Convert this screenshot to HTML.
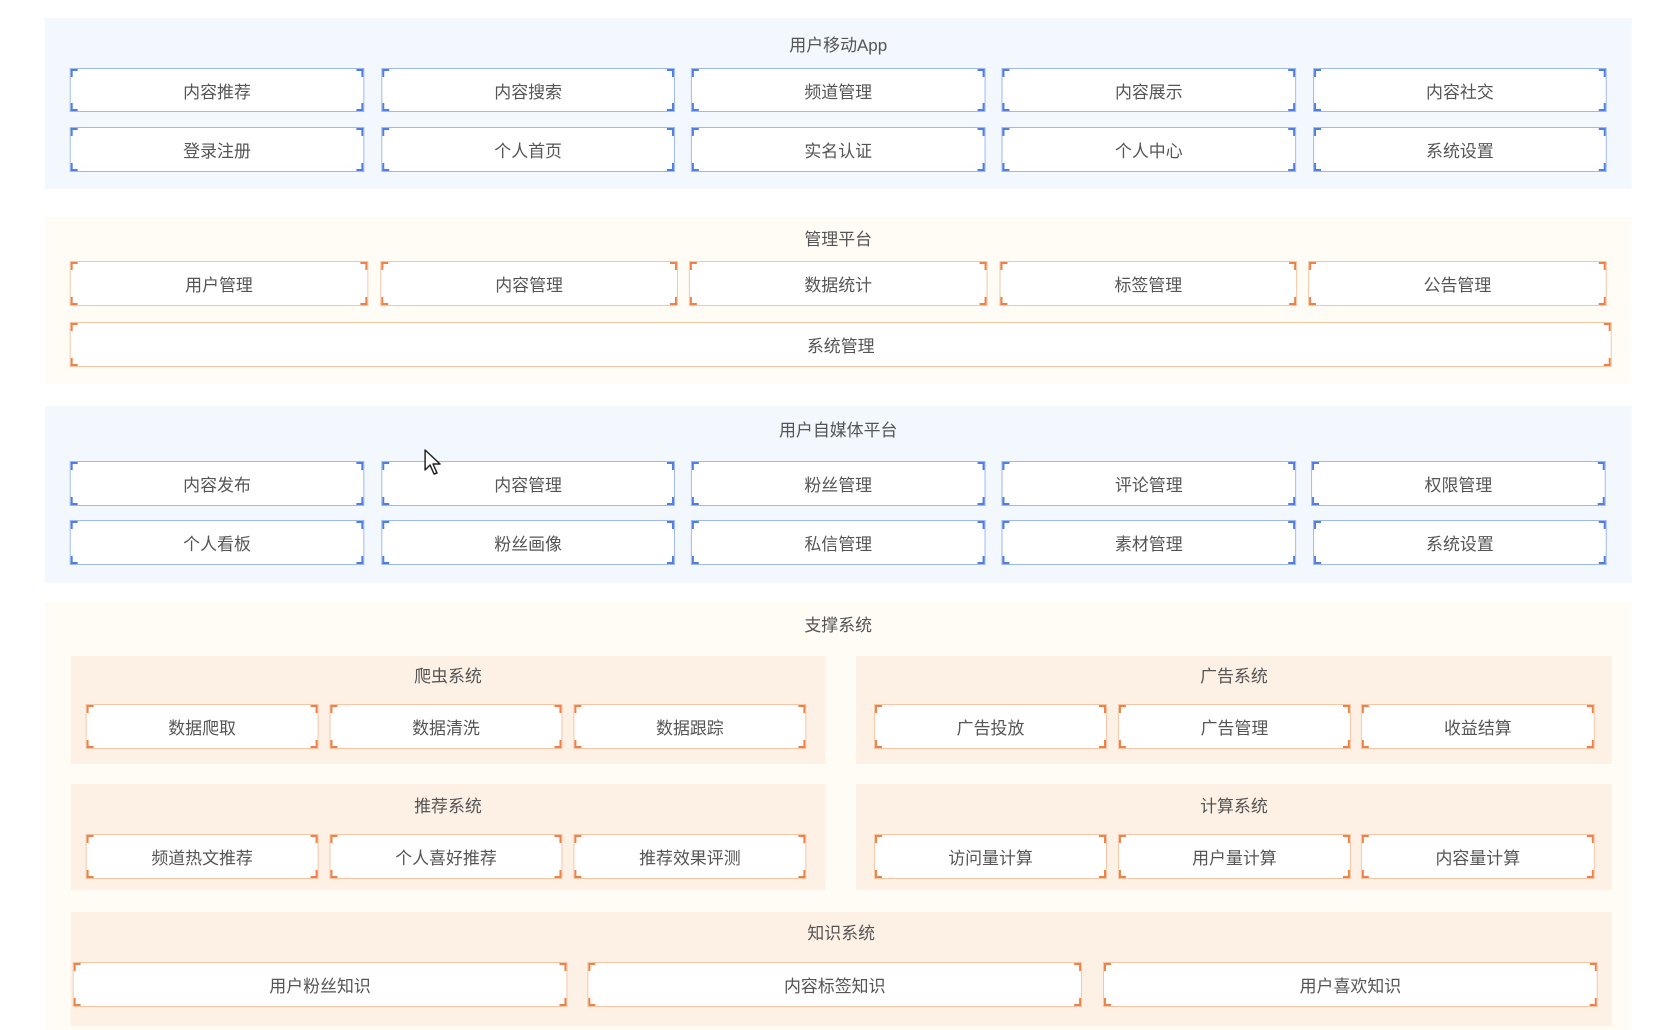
<!DOCTYPE html>
<html><head><meta charset="utf-8"><style>
body{margin:0;width:1654px;height:1030px;background:#fff;position:relative;overflow:hidden;font-family:"Liberation Sans","Noto Sans CJK SC",sans-serif;color:#555}
#w{position:absolute;left:0;top:0;width:1654px;height:1030px;transform:scaleX(0.9955);transform-origin:0 0}
.s{position:absolute}
.t{position:absolute;text-align:center;font-size:17px;color:#555;line-height:20px}
.b{position:absolute;background-color:#fff;box-sizing:border-box;border:1px solid var(--l);display:flex;align-items:center;justify-content:center;font-size:17px;color:#555;
background-image:linear-gradient(var(--c),var(--c)),linear-gradient(var(--c),var(--c)),linear-gradient(var(--c),var(--c)),linear-gradient(var(--c),var(--c)),linear-gradient(var(--c),var(--c)),linear-gradient(var(--c),var(--c)),linear-gradient(var(--c),var(--c)),linear-gradient(var(--c),var(--c));
background-repeat:no-repeat;background-size:7px 2px,2px 8px,7px 2px,2px 8px,7px 2px,2px 8px,7px 2px,2px 8px;
background-position:left top,left top,right top,right top,left bottom,left bottom,right bottom,right bottom}
.bl{--l:#9fb9ef;--c:#4f7de0}
.or{--l:#f7c5a6;--c:#ee8148}
</style></head><body><div id="w">
<div class="s" style="left:45px;top:18px;width:1594px;height:171px;background:#f3f7fe"></div>
<div class="t" style="left:45px;width:1594px;top:36px">用户移动App</div>
<div class="b bl" style="left:70px;top:68px;width:296px;height:44px">内容推荐</div>
<div class="b bl" style="left:383px;top:68px;width:295px;height:44px">内容搜索</div>
<div class="b bl" style="left:694px;top:68px;width:296px;height:44px">频道管理</div>
<div class="b bl" style="left:1006px;top:68px;width:296px;height:44px">内容展示</div>
<div class="b bl" style="left:1319px;top:68px;width:295px;height:44px">内容社交</div>
<div class="b bl" style="left:70px;top:127px;width:296px;height:45px">登录注册</div>
<div class="b bl" style="left:383px;top:127px;width:295px;height:45px">个人首页</div>
<div class="b bl" style="left:694px;top:127px;width:296px;height:45px">实名认证</div>
<div class="b bl" style="left:1006px;top:127px;width:296px;height:45px">个人中心</div>
<div class="b bl" style="left:1319px;top:127px;width:295px;height:45px">系统设置</div>

<div class="s" style="left:45px;top:217px;width:1594px;height:167px;background:#fffbf5"></div>
<div class="t" style="left:45px;width:1594px;top:230px">管理平台</div>
<div class="b or" style="left:70px;top:261px;width:300px;height:45px">用户管理</div>
<div class="b or" style="left:382px;top:261px;width:299px;height:45px">内容管理</div>
<div class="b or" style="left:692px;top:261px;width:300px;height:45px">数据统计</div>
<div class="b or" style="left:1004px;top:261px;width:299px;height:45px">标签管理</div>
<div class="b or" style="left:1314px;top:261px;width:300px;height:45px">公告管理</div>
<div class="b or" style="left:70px;top:322px;width:1549px;height:45px">系统管理</div>

<div class="s" style="left:45px;top:406px;width:1594px;height:177px;background:#f3f7fe"></div>
<div class="t" style="left:45px;width:1594px;top:421px">用户自媒体平台</div>
<div class="b bl" style="left:70px;top:461px;width:296px;height:45px">内容发布</div>
<div class="b bl" style="left:383px;top:461px;width:295px;height:45px">内容管理</div>
<div class="b bl" style="left:694px;top:461px;width:296px;height:45px">粉丝管理</div>
<div class="b bl" style="left:1006px;top:461px;width:296px;height:45px">评论管理</div>
<div class="b bl" style="left:1317px;top:461px;width:296px;height:45px">权限管理</div>
<div class="b bl" style="left:70px;top:520px;width:296px;height:45px">个人看板</div>
<div class="b bl" style="left:383px;top:520px;width:295px;height:45px">粉丝画像</div>
<div class="b bl" style="left:694px;top:520px;width:296px;height:45px">私信管理</div>
<div class="b bl" style="left:1006px;top:520px;width:296px;height:45px">素材管理</div>
<div class="b bl" style="left:1319px;top:520px;width:295px;height:45px">系统设置</div>

<div class="s" style="left:45px;top:602px;width:1594px;height:428px;background:#fffbf5"></div>
<div class="t" style="left:45px;width:1594px;top:616px">支撑系统</div>
<div class="s" style="left:71px;top:656px;width:758px;height:108px;background:#fdf1e6"></div>
<div class="t" style="left:71px;width:758px;top:667px">爬虫系统</div>
<div class="b or" style="left:86px;top:704px;width:234px;height:45px">数据爬取</div>
<div class="b or" style="left:331px;top:704px;width:234px;height:45px">数据清洗</div>
<div class="b or" style="left:576px;top:704px;width:234px;height:45px">数据跟踪</div>
<div class="s" style="left:860px;top:656px;width:759px;height:108px;background:#fdf1e6"></div>
<div class="t" style="left:860px;width:759px;top:667px">广告系统</div>
<div class="b or" style="left:878px;top:704px;width:234px;height:45px">广告投放</div>
<div class="b or" style="left:1123px;top:704px;width:234px;height:45px">广告管理</div>
<div class="b or" style="left:1367px;top:704px;width:235px;height:45px">收益结算</div>

<div class="s" style="left:71px;top:784px;width:758px;height:106px;background:#fdf1e6"></div>
<div class="t" style="left:71px;width:758px;top:797px">推荐系统</div>
<div class="b or" style="left:86px;top:834px;width:234px;height:45px">频道热文推荐</div>
<div class="b or" style="left:331px;top:834px;width:234px;height:45px">个人喜好推荐</div>
<div class="b or" style="left:576px;top:834px;width:234px;height:45px">推荐效果评测</div>
<div class="s" style="left:860px;top:784px;width:759px;height:106px;background:#fdf1e6"></div>
<div class="t" style="left:860px;width:759px;top:797px">计算系统</div>
<div class="b or" style="left:878px;top:834px;width:234px;height:45px">访问量计算</div>
<div class="b or" style="left:1123px;top:834px;width:234px;height:45px">用户量计算</div>
<div class="b or" style="left:1367px;top:834px;width:235px;height:45px">内容量计算</div>

<div class="s" style="left:71px;top:912px;width:1548px;height:114px;background:#fdf1e6"></div>
<div class="t" style="left:71px;width:1548px;top:924px">知识系统</div>
<div class="b or" style="left:73px;top:962px;width:497px;height:45px">用户粉丝知识</div>
<div class="b or" style="left:590px;top:962px;width:497px;height:45px">内容标签知识</div>
<div class="b or" style="left:1108px;top:962px;width:497px;height:45px">用户喜欢知识</div>

<svg class="s" style="left:426px;top:449px" width="20" height="28" viewBox="0 0 20 28"><path d="M1 1 L1 21 L6 16 L10 25 L13 24 L9 15 L16 15 Z" fill="#fff" stroke="#222" stroke-width="1.5" stroke-linejoin="round"/></svg>
</div></body></html>
